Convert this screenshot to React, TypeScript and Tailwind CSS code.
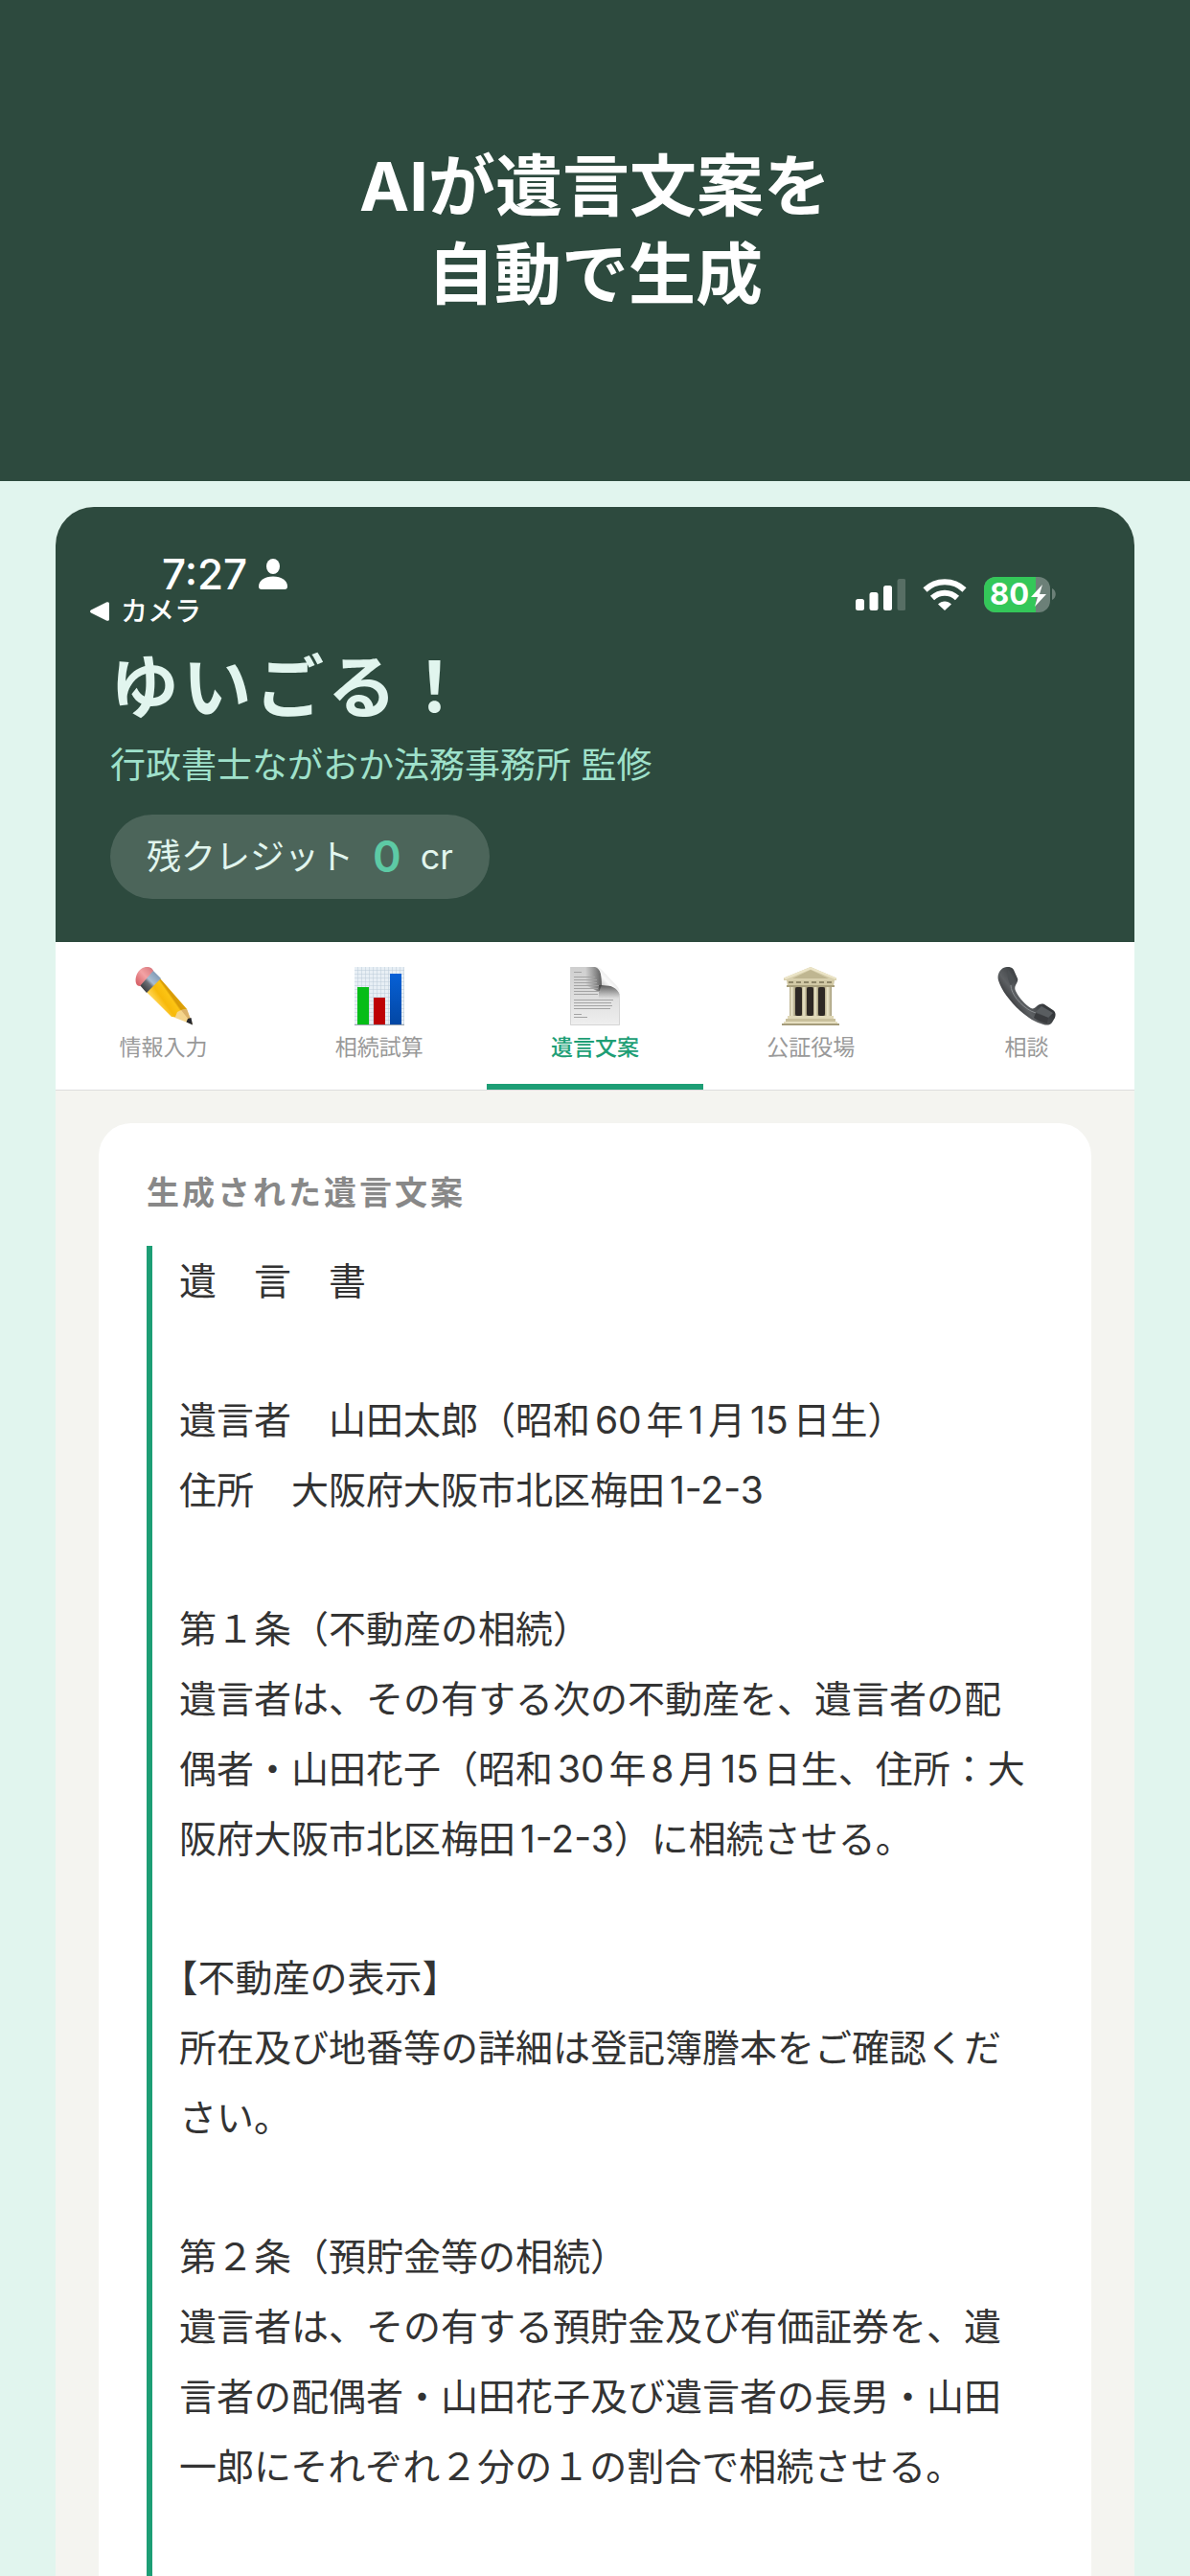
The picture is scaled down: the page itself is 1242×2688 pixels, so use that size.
import { useState, type ReactNode } from "react";

type Tab = {
    id: string;
    label: string;
    icon: ReactNode;
};

function PencilIcon() {
    return (
        <svg width="60" height="61" viewBox="0 0 60 61" aria-hidden="true">
            <defs>
                <linearGradient id="pencilBody" x1="20" y1="34" x2="40" y2="20" gradientUnits="userSpaceOnUse">
                    <stop offset="0" stopColor="#ffd24a" />
                    <stop offset="0.3" stopColor="#f7b90a" />
                    <stop offset="0.62" stopColor="#fcc414" />
                    <stop offset="0.7" stopColor="#d79a06" />
                    <stop offset="1" stopColor="#e2a80c" />
                </linearGradient>
                <linearGradient id="pencilBand" x1="8" y1="24" x2="24" y2="8" gradientUnits="userSpaceOnUse">
                    <stop offset="0" stopColor="#3a3a3c" />
                    <stop offset="0.4" stopColor="#6b6f76" />
                    <stop offset="0.55" stopColor="#a9bdd2" />
                    <stop offset="1" stopColor="#7f99b6" />
                </linearGradient>
                <linearGradient id="pencilEraser" x1="2" y1="16" x2="18" y2="2" gradientUnits="userSpaceOnUse">
                    <stop offset="0" stopColor="#d9666c" />
                    <stop offset="0.5" stopColor="#f3a2a4" />
                    <stop offset="1" stopColor="#d97a80" />
                </linearGradient>
            </defs>
            <path d="M12 26 26 12 54 44 60 60 39 52Z" fill="#f5d58c" />
            <path d="M12 26 26 12 54 44 48 45 44 47 42 52 38 52Z" fill="url(#pencilBody)" />
            <path d="M48 45 60 60 54 44Z" fill="#dcb269" />
            <path d="M53.500 57.500 55 54 58.500 53 60 60.500Z" fill="#26272b" />
            <path d="M4 18 18 3 27 12 12 27Z" fill="url(#pencilBand)" />
            <path d="M1 17C-1 10 4 1 11 0C15-.5 18 1 19 4L5 20C3 20 1.500 19 1 17Z" fill="url(#pencilEraser)" />
        </svg>
    );
}

function ChartIcon() {
    return (
        <svg width="52" height="61" viewBox="0 0 52 61" aria-hidden="true">
            <defs>
                <pattern id="chartGrid" width="4" height="4" patternUnits="userSpaceOnUse">
                    <path d="M4 0V4H0" fill="none" stroke="#bccbd9" strokeWidth="1" />
                </pattern>
                <linearGradient id="chartBlue" x1="0" y1="0" x2="0" y2="1">
                    <stop offset="0" stopColor="#0660d6" />
                    <stop offset="1" stopColor="#0347a4" />
                </linearGradient>
            </defs>
            <rect width="52" height="61" fill="#e8eff5" />
            <rect width="52" height="61" fill="url(#chartGrid)" />
            <rect x="3" y="21" width="12" height="39" fill="#06bd17" />
            <rect x="20" y="32" width="12" height="28" fill="#bd0205" />
            <rect x="37" y="7" width="12" height="53" fill="url(#chartBlue)" />
            <rect y="60" width="52" height="1" fill="#9aa5af" />
        </svg>
    );
}

function DocumentIcon() {
    return (
        <svg width="52" height="61" viewBox="0 0 52 61" aria-hidden="true">
            <defs>
                <linearGradient id="docPage" x1="0" y1="0" x2="0" y2="1">
                    <stop offset="0" stopColor="#cfcfcf" />
                    <stop offset="0.5" stopColor="#dedede" />
                    <stop offset="1" stopColor="#efefef" />
                </linearGradient>
                <linearGradient id="docShadeLeft" x1="16" y1="0" x2="33" y2="0" gradientUnits="userSpaceOnUse">
                    <stop offset="0" stopColor="#555" stopOpacity="0" />
                    <stop offset="1" stopColor="#4a4a4a" stopOpacity="0.85" />
                </linearGradient>
                <linearGradient id="docShadeBelow" x1="0" y1="18" x2="0" y2="33" gradientUnits="userSpaceOnUse">
                    <stop offset="0" stopColor="#3d3d3d" stopOpacity="0.9" />
                    <stop offset="1" stopColor="#666" stopOpacity="0" />
                </linearGradient>
                <linearGradient id="docCurl" x1="32" y1="20" x2="44" y2="9" gradientUnits="userSpaceOnUse">
                    <stop offset="0" stopColor="#c4c4c4" />
                    <stop offset="0.5" stopColor="#fafafa" />
                    <stop offset="1" stopColor="#e2e2e2" />
                </linearGradient>
            </defs>
            <path d="M0 0H26C31 1 33 5 33 19C46 19 50 22 52 29V61H0Z" fill="url(#docPage)" />
            <path d="M16 0H26C31 1 33 5 33 19L30 26 16 19Z" fill="url(#docShadeLeft)" />
            <path d="M30 19H33C46 19 50 22 52 29V33H30Z" fill="url(#docShadeBelow)" />
            <path d="M26 0C29 0 31 1 33 3L49 20C51 22 52 25 52 29C49 22 44 19 33 19C33 8 32 2 26 0Z" fill="url(#docCurl)" />
            <g stroke="#a3a3a3" strokeWidth="1">
                <path d="M4 5.500h8M4 10.500h22M4 13.500h24M4 16.500h24M4 19.500h26M4 22.500h25M4 25.500h28M4 28.500h25" />
                <path d="M4 34.500h41M4 37.500h39M4 40.500h40M4 43.500h38M4 49.500h8M4 52.500h14" />
            </g>
            <path d="M.500 0V60.500H51.500V29" fill="none" stroke="#d4d4d4" />
        </svg>
    );
}

function BankIcon() {
    return (
        <svg width="60" height="61" viewBox="0 0 60 61" aria-hidden="true">
            <defs>
                <linearGradient id="bankColumn" x1="0" y1="0" x2="1" y2="0">
                    <stop offset="0" stopColor="#b5ac8a" />
                    <stop offset="0.4" stopColor="#eee8cc" />
                    <stop offset="1" stopColor="#a39a78" />
                </linearGradient>
            </defs>
            <path d="M8 20H52V52H8Z" fill="#8d8467" />
            <rect x="14" y="21" width="7" height="30" rx="2" fill="#2e2824" />
            <rect x="26" y="21" width="7" height="30" rx="2" fill="#2e2824" />
            <rect x="38" y="21" width="7" height="30" rx="2" fill="#2e2824" />
            <rect x="8" y="20" width="6" height="32" fill="url(#bankColumn)" />
            <rect x="21" y="20" width="5" height="32" fill="url(#bankColumn)" />
            <rect x="33" y="20" width="5" height="32" fill="url(#bankColumn)" />
            <rect x="45" y="20" width="7" height="32" fill="url(#bankColumn)" />
            <path d="M30 0 57 11.500V14H2V11.500Z" fill="#d8d0ae" />
            <path d="M30 3 49 12H11Z" fill="#bfb691" />
            <path d="M30 0 57 11.500 56 13 30 2.500 4 13 2 11.500Z" fill="#ece5c8" />
            <path d="M5 14H55L54 20H6Z" fill="#d2c9a5" />
            <path d="M7 16H53" stroke="#8f8768" strokeWidth="2" strokeDasharray="5 3" />
            <path d="M5 19H55V21H5Z" fill="#a89f7c" />
            <path d="M6 51H54V54H6Z" fill="#e0d8b8" />
            <path d="M4 54H56V57H4Z" fill="#c9c09c" />
            <path d="M2 57H58V59H2Z" fill="#e6dfc1" />
            <path d="M0 59H60V61H0Z" fill="#a59c7b" />
        </svg>
    );
}

function PhoneIcon() {
    return (
        <svg width="61" height="61" viewBox="0 0 61 61" aria-hidden="true">
            <defs>
                <linearGradient id="phoneBody" x1="12" y1="44" x2="38" y2="24" gradientUnits="userSpaceOnUse">
                    <stop offset="0" stopColor="#2a2b2d" />
                    <stop offset="0.45" stopColor="#5d6063" />
                    <stop offset="1" stopColor="#34373a" />
                </linearGradient>
            </defs>
            <path
                d="M10 0C13-.5 16 1 17 3L21 12C22 14 20 17 19 19C18 21 18 23 19 25C23 33 29 39 35 43C37 44 39 43 41 41C43 39 46 38 49 39L58 45C61 47 61 50 60 53L57 58C55 61 51 61 48 60C40 58 32 53 24 46C13 36 4 24 1 14C-1 7 4 0 10 0Z"
                fill="url(#phoneBody)"
            />
            <path d="M11 3C14 6 17 11 18 14L14 19C11 15 10 9 11 3Z" fill="#4c5053" />
            <path d="M14 19C14 28 24 40 35 46L40 48" fill="none" stroke="#8a8e91" strokeWidth="1" />
            <path d="M40 47 46 41 58 48 53 53Z" fill="#595d60" />
            <path d="M40 48 53 53 52 59C46 58 42 56 38 53Z" fill="#3a3c3f" />
        </svg>
    );
}

function PersonIcon() {
    return (
        <svg width="30" height="32" viewBox="0 0 30 32" fill="#fff" aria-hidden="true">
            <ellipse cx="15" cy="8" rx="7" ry="8" />
            <path d="M0 29C0 23 6 18.500 15 18.500S30 23 30 29C30 31 29 32 27 32H3C1 32 0 31 0 29Z" />
        </svg>
    );
}

function SignalIcon() {
    return (
        <svg width="52" height="33" viewBox="0 0 52 33" fill="#fff" aria-hidden="true">
            <rect y="21" width="9" height="12" rx="2.500" />
            <rect x="14.500" y="14" width="9" height="19" rx="2.500" />
            <rect x="29" y="7" width="9" height="26" rx="2.500" />
            <rect x="43.500" width="9" height="33" rx="2.500" opacity="0.2" />
        </svg>
    );
}

function WifiIcon() {
    return (
        <svg width="46" height="33" viewBox="0 0 46 33" aria-hidden="true">
            <path d="M2.500 11.500C14 .5 32 .5 43.500 11.500" fill="none" stroke="#fff" strokeWidth="6" />
            <path d="M10 20C17.500 13 28.500 13 36 20" fill="none" stroke="#fff" strokeWidth="6" />
            <path d="M23 33 16 26.500C20 22.500 26 22.500 30 26.500Z" fill="#fff" />
        </svg>
    );
}

function Battery() {
    return (
        <div className="flex items-center gap-0.5">
            <div className="relative flex h-[37px] w-[69px] items-center overflow-hidden rounded-[12px] bg-[#6c8078]">
                <div className="absolute inset-y-0 left-0 w-[54px] bg-[#34c759]" />
                <span className="relative pl-1.5 text-[31px] leading-9 font-bold">80</span>
                <svg className="absolute right-1 top-2" width="16" height="23" viewBox="0 0 16 23" aria-hidden="true">
                    <path d="M12 0 0 13H7L4 23 16 10H9Z" fill="#fff" />
                </svg>
            </div>
            <svg width="4" height="12" viewBox="0 0 4 12" aria-hidden="true">
                <path d="M0 0C5 2 5 10 0 12Z" fill="#6c8078" />
            </svg>
        </div>
    );
}

const tabs: Tab[] = [
    { id: "input", label: "情報入力", icon: <PencilIcon /> },
    { id: "estimate", label: "相続試算", icon: <ChartIcon /> },
    { id: "draft", label: "遺言文案", icon: <DocumentIcon /> },
    { id: "notary", label: "公証役場", icon: <BankIcon /> },
    { id: "consult", label: "相談", icon: <PhoneIcon /> },
];

const draft: string[] = [
    "遺　言　書",
    "遺言者　山田太郎（昭和60年1月15日生）\n住所　大阪府大阪市北区梅田1-2-3",
    "第１条（不動産の相続）\n遺言者は、その有する次の不動産を、遺言者の配偶者・山田花子（昭和30年8月15日生、住所：大阪府大阪市北区梅田1-2-3）に相続させる。",
    "【不動産の表示】\n所在及び地番等の詳細は登記簿謄本をご確認ください。",
    "第２条（預貯金等の相続）\n遺言者は、その有する預貯金及び有価証券を、遺言者の配偶者・山田花子及び遺言者の長男・山田一郎にそれぞれ２分の１の割合で相続させる。",
];

function StatusBar() {
    return (
        <div className="flex items-center justify-between pl-9 pr-[82px] text-white">
            <div>
                <div className="flex items-center gap-3 pl-[75px]">
                    <span className="text-[44px] leading-[44px] font-medium">7:27</span>
                    <PersonIcon />
                </div>
                <button type="button" className="flex items-center gap-3 text-[28px] leading-[34px] font-medium">
                    <svg width="20" height="20" viewBox="0 0 20 20" fill="#fff" aria-hidden="true">
                        <path d="M1 8.500 17 .5C19-.3 20 .5 20 2V18C20 19.500 19 20.300 17 19.500L1 11.500C-.3 10.700-.3 9.300 1 8.500Z" />
                    </svg>
                    カメラ
                </button>
            </div>
            <div className="flex items-center gap-[18px] pt-2">
                <SignalIcon />
                <WifiIcon />
                <Battery />
            </div>
        </div>
    );
}

export default function App() {
    const [activeTab, setActiveTab] = useState("draft");

    return (
        <div
            lang="ja"
            className="flex min-h-screen flex-col bg-[#e1f5ee] font-['Inter','Noto_Sans_CJK_JP',sans-serif] text-[#333]"
        >
            <div className="bg-[#2d4a3e] pt-[149px] pb-[169px] text-center text-[70px] leading-[92px] font-bold text-white">
                AIが遺言文案を
                <br />
                自動で生成
            </div>

            <div className="mx-[58px] mt-[27px] flex flex-1 flex-col overflow-hidden rounded-t-[40px] bg-[#f4f4f0]">
                <header className="bg-[#2d4a3e] pt-12 pb-[45px]">
                    <StatusBar />
                    <div className="px-[57px]">
                        <h1 className="mt-[18px] text-[72px] leading-[88px] font-bold tracking-wider text-[#e1f5ee]">ゆいごる！</h1>
                        <p className="mt-3 text-[37px] leading-[52px] text-[#9fe1cb]">行政書士ながおか法務事務所 監修</p>
                        <div className="mt-[25px] flex h-[88px] w-fit items-center gap-5 rounded-full bg-white/15 px-[38px] text-[36px] text-[#e1f5ee]">
                            <span>残クレジット</span>
                            <span className="text-[45px] font-semibold text-[#5dcaa5]">0</span>
                            <span>cr</span>
                        </div>
                    </div>
                </header>

                <nav className="grid grid-cols-5 border-b border-[#ddd] bg-white">
                    {tabs.map((tab) => (
                        <button
                            key={tab.id}
                            type="button"
                            onClick={() => setActiveTab(tab.id)}
                            className={`flex flex-col items-center gap-2 border-b-6 pt-[26px] pb-[23px] text-[23px] leading-[30px]
                            ${activeTab === tab.id ? "border-[#1d9e75] font-medium text-[#1d9e75]" : "border-transparent text-[#999]"}`}
                        >
                            {tab.icon}
                            {tab.label}
                        </button>
                    ))}
                </nav>

                <main className="flex flex-1 flex-col px-[45px] pt-[34px]">
                    <section className="flex flex-1 flex-col rounded-t-[34px] bg-white px-[50px] pt-[50px]">
                        <h2 className="mb-8 text-[34px] leading-[46px] font-bold tracking-[3px] text-[#888]">生成された遺言文案</h2>
                        <div className="flex flex-1 flex-col gap-[72px] border-l-6 border-[#1d9e75] pr-2 pb-20 pl-7 text-[39px] leading-[73px] whitespace-pre-line [text-autospace:normal] [text-spacing-trim:trim-start]">
                            {draft.map((paragraph) => (
                                <p key={paragraph}>{paragraph}</p>
                            ))}
                        </div>
                    </section>
                </main>
            </div>
        </div>
    );
}
